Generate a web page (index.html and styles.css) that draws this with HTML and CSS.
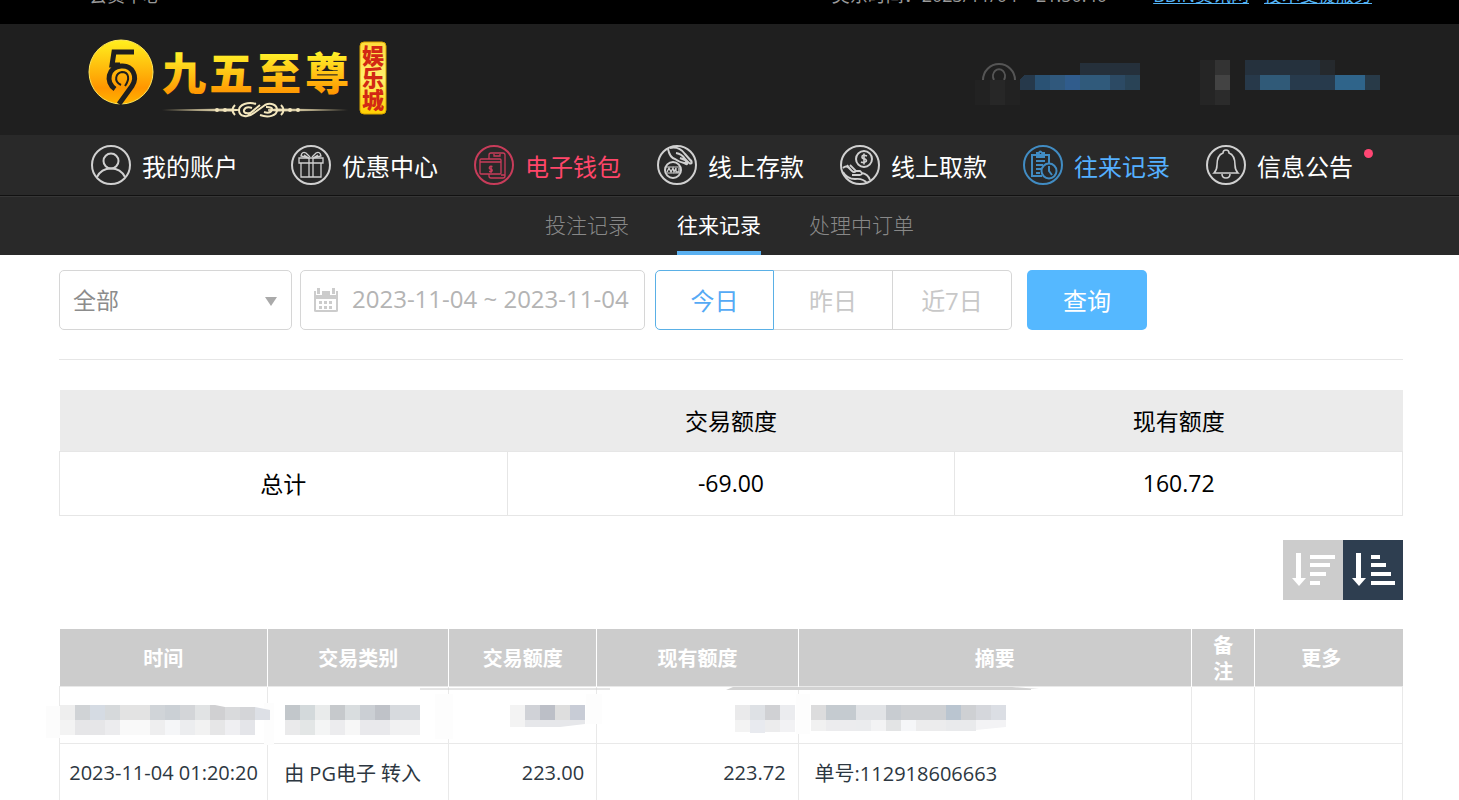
FILE: index.html
```html
<!DOCTYPE html>
<html lang="zh-CN">
<head>
    <meta charset="UTF-8">
    <meta name="viewport" content="width=device-width, initial-scale=1.0">
    <title>往来记录</title>
    <link rel="stylesheet" href="styles.css">
</head>
<body>

    <div class="topbar">
        <span>会员中心</span>
        <div class="topbar-right">
            <span class="topbar-time">美东时间：2023/11/04&nbsp;&nbsp;&nbsp; 21:50:40</span>
            <a href="#">BBIN资讯网</a>
            <a href="#">技术支援服务</a>
        </div>
    </div>

    <header class="header">
        <a href="#" class="logo">
            <svg width="300" height="82" viewBox="88 38 300 82">
                <defs>
                    <linearGradient id="gold" x1="0" y1="0" x2="0" y2="1">
                        <stop offset="0" stop-color="#fff01e"/>
                        <stop offset="0.75" stop-color="#ff9600"/>
                        <stop offset="1" stop-color="#ffb400"/>
                    </linearGradient>
                    <linearGradient id="goldText" gradientUnits="userSpaceOnUse" x1="0" y1="52" x2="0" y2="94">
                        <stop offset="0" stop-color="#fff32a"/>
                        <stop offset="1" stop-color="#ff9500"/>
                    </linearGradient>
                    <linearGradient id="badge" x1="0" y1="0" x2="0" y2="1">
                        <stop offset="0" stop-color="#ffdc3c"/>
                        <stop offset="0.5" stop-color="#fff06e"/>
                        <stop offset="1" stop-color="#ffcf00"/>
                    </linearGradient>
                    <linearGradient id="line" gradientUnits="userSpaceOnUse" x1="162" y1="0" x2="348" y2="0">
                        <stop offset="0" stop-color="#e6d5a0" stop-opacity="0"/>
                        <stop offset="0.35" stop-color="#f3e6bd"/>
                        <stop offset="0.65" stop-color="#f3e6bd"/>
                        <stop offset="1" stop-color="#e6d5a0" stop-opacity="0"/>
                    </linearGradient>
                </defs>
                <circle cx="121" cy="72" r="32" fill="url(#gold)" stroke="#ffe65a"/>
                <g fill="none" stroke="#1f1f1f">
                    <path d="M134 52H114L112 65H120" stroke-width="5"/>
                    <path d="M115 89C105 82 108 67 121 66C133 65 138 77 132 86L119 104" stroke-width="5"/>
                    <path d="M121 85C113 81 116 73 122 72C129 72 130 79 125 86" stroke-width="2"/>
                </g>
                <text class="logo-name" x="162 209 257 305" y="90" fill="url(#goldText)">九五至尊</text>
                <path d="M162 110L232 109L240 110L232 111ZM348 110L276 109L268 110L276 111Z" fill="url(#line)" stroke="url(#line)"/>
                <g fill="none" stroke="#f3e6bd" stroke-width="2">
                    <path d="M256 104C248 101 239 105 239 110C239 117 248 118 254 113L265 105C271 102 277 105 277 110C277 116 268 118 260 115"/>
                    <path d="M250 113Q243 114 244 110Q246 106 252 108M266 107Q273 107 272 110Q270 114 264 112M248 115L260 105"/>
                    <path d="M235 105Q230 110 235 115M281 105Q286 110 281 115"/>
                </g>
                <g fill="#f3e6bd">
                    <circle cx="217" cy="110" r="2"/><circle cx="225" cy="110" r="2"/>
                    <circle cx="290" cy="110" r="2"/><circle cx="298" cy="110" r="2"/>
                </g>
                <rect x="360" y="42" width="26" height="72" rx="4" fill="url(#badge)" stroke="#d9a400"/>
                <text class="logo-badge" x="373" y="45">娱乐城</text>
            </svg>
        </a>
        <svg class="account" width="405" height="46" viewBox="975 60 405 46" shape-rendering="crispEdges">
            <g fill="none" stroke="#555" stroke-width="2" shape-rendering="auto">
                <path d="M983 80A16 16 0 0 1 1015 80"/>
                <path d="M994 80A6 7 0 1 1 1004 80"/>
            </g>
            <path d="M975 80h45v25h-45z" fill="#222"/><path d="M990 80h15v25h-15z" fill="#272727"/>
            <path d="M1080 63h60v12h-60z" fill="#25303b"/>
            <path d="M1020 80l4-5h11v15h-15z" fill="#26394b"/>
            <path d="M1035 75h15v15h-15z" fill="#2a5274"/>
            <path d="M1050 75h15v15h-15z" fill="#30587c"/>
            <path d="M1065 75h15v15h-15z" fill="#305c8c"/>
            <path d="M1080 75h30v15h-30z" fill="#305a7b"/>
            <path d="M1110 75h15v15h-15z" fill="#2c4a64"/>
            <path d="M1125 75h15v15h-15z" fill="#294356"/>
            <path d="M1200 60h15v45h-15z" fill="#252525"/>
            <path d="M1215 60h15v15h-15z" fill="#333"/>
            <path d="M1215 75h15v15h-15z" fill="#434343"/>
            <path d="M1215 90h15v15h-15z" fill="#2b2b2b"/>
            <path d="M1245 60h75v15h-75z" fill="#25313d"/>
            <path d="M1320 60h15v15h-15z" fill="#25292d"/>
            <path d="M1245 75h15v15h-15z" fill="#27394a"/>
            <path d="M1260 75h30v15h-30z" fill="#305a78"/>
            <path d="M1290 75h45v15h-45z" fill="#273a4c"/>
            <path d="M1335 75h30v15h-30z" fill="#2f648a"/>
            <path d="M1365 75h15v15h-15z" fill="#283a48"/>
        </svg>
    </header>

    <nav class="nav">
        <a href="#" class="nav-item nav-account">
            <svg class="nav-icon" viewBox="0 0 40 40">
                <circle cx="20" cy="20" r="19"/>
                <circle cx="20" cy="16" r="7.500"/>
                <path d="M6 32C9 26 14 23.500 20 23.500S31 26 34 32"/>
            </svg>
            我的账户
        </a>
        <a href="#" class="nav-item">
            <svg class="nav-icon" viewBox="0 0 40 40">
                <circle cx="20" cy="20" r="19"/>
                <g stroke-width="1.300">
                    <path d="M8 13H32V18H8ZM10 18V32H30V18M18 13V32M22 13V32"/>
                    <path d="M18 13L10 11Q11 6 15 8L19 12M22 13L30 11Q29 6 25 8L21 12M13 10L18 13M27 10L22 13"/>
                </g>
            </svg>
            优惠中心
        </a>
        <a href="#" class="nav-item nav-wallet">
            <svg class="nav-icon" viewBox="0 0 40 40">
                <circle cx="20" cy="20" r="19"/>
                <g stroke-width="1.300">
                    <rect x="6" y="14" width="21" height="15" rx="1"/>
                    <path d="M6 17H27M15 14V10Q15 8 17 8H29Q31 8 31 10V31Q31 33 29 33H17Q15 33 15 31V29M20 9V11H26V9M27 30H31"/>
                    <path d="M18.500 21.500H16Q14.500 23 16 24H17.500Q19 25.500 17.500 26.500H15M17 20.500V28"/>
                </g>
            </svg>
            电子钱包
        </a>
        <a href="#" class="nav-item">
            <svg class="nav-icon" viewBox="0 0 40 40">
                <circle cx="20" cy="20" r="19"/>
                <circle cx="16" cy="25" r="8"/>
                <path d="M9 22H23M9 28H23" stroke-width="1"/>
                <path d="M10 27L12 23L14 27L16 23L17 27L19 23V27H22V23" stroke-width="1.300"/>
                <path d="M11 4Q13 13 18 14Q22 17 27 18Q31 17 28 15L23 13M13 3Q22 1 28 9L35 17M19 8Q25 9 28 14L32 18M27 18Q31 21 30 17M32 18Q36 20 34 15"/>
            </svg>
            线上存款
        </a>
        <a href="#" class="nav-item">
            <svg class="nav-icon" viewBox="0 0 40 40">
                <circle cx="20" cy="20" r="19"/>
                <circle cx="24" cy="14" r="8"/>
                <path d="M27 11Q22 9 22 12Q22 14 25 14Q28 16 25 17Q23 18 21 17M24 8.500V19.500" stroke-width="1.600"/>
                <path d="M3 23Q6 20 9 23L12 26Q14 28 16 26L10 20M3 27Q7 34 15 34Q23 33 27 38M12 30H20Q24 29 20 26H15M22 28Q28 29 30 35M7 20L12 26" stroke-width="1.800"/>
            </svg>
            线上取款
        </a>
        <a href="#" class="nav-item nav-current">
            <svg class="nav-icon" viewBox="0 0 40 40">
                <circle cx="20" cy="20" r="19"/>
                <g stroke-width="2">
                    <path d="M19 31H9V10H26V18M14 8H16Q17 5 19 8H21V12H14ZM13 16H22M13 20H20M13 24H18M13 28H17"/>
                    <circle cx="26" cy="26" r="7.500"/>
                    <path d="M26 21V26L29 30"/>
                </g>
            </svg>
            往来记录
        </a>
        <a href="#" class="nav-item">
            <svg class="nav-icon" viewBox="0 0 40 40">
                <circle cx="20" cy="20" r="19"/>
                <path d="M8 28Q11 25 11 20Q11 10 17 8Q17 5 20 5T23 8Q29 10 29 20Q29 25 32 28ZM16 29Q16 33 20 33T24 29" stroke-width="1.600"/>
            </svg>
            信息公告
            <span class="nav-dot"></span>
        </a>
    </nav>

    <nav class="subnav">
        <a href="#">投注记录</a>
        <a href="#" class="active">往来记录</a>
        <a href="#">处理中订单</a>
    </nav>

    <main class="content">
        <form class="filters">
            <div class="select-box">
                <select aria-label="交易类别">
                    <option>全部</option>
                </select>
            </div>
            <label class="date-box">
                <svg width="26" height="26" viewBox="0 0 26 26">
                    <path d="M1 4H25V24Q25 25 23 25H3Q1 25 1 24Z" fill="#ccc"/>
                    <path d="M3 12H23V23H3Z" fill="#fff"/>
                    <path d="M3 0H9V8H3ZM17 0H23V8H17Z" fill="#fff"/>
                    <path d="M4 1H7V7H4ZM19 1H22V7H19Z" fill="#ccc"/>
                    <path d="M6 14H9V17H6ZM11 14H14V17H11ZM16 14H19V17H16ZM6 19H9V22H6ZM11 19H14V22H11ZM16 19H19V22H16Z" fill="#ccc"/>
                </svg>
                <input type="text" value="2023-11-04 ~ 2023-11-04" aria-label="日期" readonly>
            </label>
            <div class="days">
                <button type="button" class="active">今日</button>
                <button type="button">昨日</button>
                <button type="button">近7日</button>
            </div>
            <button type="button" class="search-btn">查询</button>
        </form>

        <table class="summary">
            <thead>
                <tr>
                    <th></th>
                    <th>交易额度</th>
                    <th>现有额度</th>
                </tr>
            </thead>
            <tbody>
                <tr>
                    <td>总计</td>
                    <td>-69.00</td>
                    <td>160.72</td>
                </tr>
            </tbody>
        </table>

        <div class="sort">
            <button type="button" aria-label="降序">
                <svg width="60" height="60" viewBox="0 0 60 60">
                    <path d="M13 13H18V38H23L16 46L9 38H13Z"/>
                    <path d="M27 15H52V19H27ZM27 23H47V27H27ZM27 32H43V36H27ZM27 41H37V45H27Z"/>
                </svg>
            </button>
            <button type="button" class="active" aria-label="升序">
                <svg width="60" height="60" viewBox="0 0 60 60">
                    <path d="M13 13H18V38H23L16 46L9 38H13Z"/>
                    <path d="M28 15H37V19H28ZM28 23H43V27H28ZM28 32H48V36H28ZM28 41H52V45H28Z"/>
                </svg>
            </button>
        </div>

        <table class="records">
            <colgroup>
                <col class="col-time">
                <col class="col-type">
                <col class="col-amount">
                <col class="col-balance">
                <col class="col-summary">
                <col class="col-remark">
                <col class="col-more">
            </colgroup>
            <thead>
                <tr>
                    <th>时间</th>
                    <th>交易类别</th>
                    <th>交易额度</th>
                    <th>现有额度</th>
                    <th>摘要</th>
                    <th>备注</th>
                    <th class="more">更多</th>
                </tr>
            </thead>
            <tbody>
                <tr class="masked">
                    <td>
                        <svg width="208" height="56" viewBox="60 687 208 56">
                            <path d="M46 706h14v32h-14z" fill="#fcfcfc"/>
                            <path d="M264 703h10v42h-10z" fill="#fdfdfd"/>
                            <path d="M60 705h15v15h-15z" fill="#eee"/>
                            <path d="M75 705h15v15h-15z" fill="#d0d3d6"/>
                            <path d="M90 705h15v15h-15z" fill="#d5dbe3"/>
                            <path d="M105 705h15v15h-15z" fill="#d6d9db"/>
                            <path d="M120 705h30v15h-30z" fill="#e3e3e3"/>
                            <path d="M150 705h15v15h-15z" fill="#d0d4d8"/>
                            <path d="M165 705h15v15h-15z" fill="#cbd0d5"/>
                            <path d="M180 705h15v15h-15z" fill="#d3d5d8"/>
                            <path d="M195 705h15v15h-15z" fill="#e1e3e4"/>
                            <path d="M210 705h5l10 2v13h-15z" fill="#d0d0d2"/>
                            <path d="M225 707h15v13h-15z" fill="#d9dadc"/>
                            <path d="M240 707h15v13h-15z" fill="#d4d5d8"/>
                            <path d="M255 707l15 3v10h-15z" fill="#dde0e6"/>
                            <path d="M60 720h15v15h-15z" fill="#f3f3f3"/>
                            <path d="M75 720h30v15h-30z" fill="#e6e6e8"/>
                            <path d="M105 720h15v15h-15z" fill="#ececee"/>
                            <path d="M120 720h30v15h-30z" fill="#f9f9f9"/>
                            <path d="M150 720h15v15h-15z" fill="#eeeeef"/>
                            <path d="M165 720h15v15h-15z" fill="#f5f6f8"/>
                            <path d="M180 720h15v15h-15z" fill="#ecedef"/>
                            <path d="M195 720h15v15h-15z" fill="#f2f2f2"/>
                            <path d="M210 720h15v15h-15z" fill="#e6e6e7"/>
                            <path d="M225 720h15v15h-15z" fill="#efeff2"/>
                            <path d="M240 720h15v15h-15z" fill="#e4e5e9"/>
                        </svg>
                    </td>
                    <td>
                        <svg width="180" height="56" viewBox="268 687 180 56">
                            <path d="M420 689h190" stroke="#ccc"/>
                            <path d="M435 694h18v45h-18z" fill="#fdfdfd"/>
                            <path d="M285 705h15v15h-15z" fill="#c2c7cb"/>
                            <path d="M300 705h15v15h-15z" fill="#d3d9db"/>
                            <path d="M315 705h15v15h-15z" fill="#e9ebeb"/>
                            <path d="M330 705h15v15h-15z" fill="#c6c9cc"/>
                            <path d="M345 705h15v15h-15z" fill="#d9dddf"/>
                            <path d="M360 705h15v15h-15z" fill="#cbcfd4"/>
                            <path d="M375 705h15v15h-15z" fill="#bfc2c8"/>
                            <path d="M390 705h30v15h-30z" fill="#d7dade"/>
                            <path d="M285 720h15v15h-15z" fill="#eaeaeb"/>
                            <path d="M300 720h15v15h-15z" fill="#e3e6e6"/>
                            <path d="M315 720h15v15h-15z" fill="#f4f5f5"/>
                            <path d="M330 720h15v15h-15z" fill="#ececee"/>
                            <path d="M345 720h15v15h-15z" fill="#f7f7f7"/>
                            <path d="M360 720h30v15h-30z" fill="#e9e9ec"/>
                            <path d="M390 720h30v15h-30z" fill="#f1f1f2"/>
                        </svg>
                    </td>
                    <td>
                        <svg width="147" height="56" viewBox="449 687 147 56">
                            <path d="M586 694h16v30h-16z" fill="#fdfdfd"/>
                            <path d="M510 705h15v22h-15z" fill="#f3f3f3"/>
                            <path d="M525 705h15v15h-15z" fill="#d0d2d7"/>
                            <path d="M540 705h15v15h-15z" fill="#bcbfc7"/>
                            <path d="M555 705h15v15h-15z" fill="#dedede"/>
                            <path d="M570 705h15v15h-15z" fill="#c8ccd6"/>
                            <path d="M525 720h60v4l-25 3h-35z" fill="#e6e7ea"/>
                        </svg>
                    </td>
                    <td>
                        <svg width="200" height="56" viewBox="597 687 200 56">
                            <path d="M726 690l7-3h279l27 2h-8v1z" fill="#d2d2d2"/>
                            <path d="M796 694h14v40h-14z" fill="#fdfdfd"/>
                            <path d="M735 705h15v15h-15z" fill="#eaeaeb"/>
                            <path d="M750 705h15v15h-15z" fill="#dee1e5"/>
                            <path d="M765 705h15v15h-15z" fill="#d0d1d4"/>
                            <path d="M780 705h15v15h-15z" fill="#ebecef"/>
                            <path d="M735 720h15v12h-15z" fill="#f3f3f3"/>
                            <path d="M750 720h15v13h-15z" fill="#e8eaef"/>
                            <path d="M765 720h15v12h-15z" fill="#ececed"/>
                            <path d="M780 720h15v12h-15z" fill="#f2f2f4"/>
                        </svg>
                    </td>
                    <td>
                        <svg width="393" height="56" viewBox="798 687 393 56">
                            <path d="M810 705h15v15h-15z" fill="#dcdcdd"/>
                            <path d="M825 705h30v15h-30z" fill="#c5cbd0"/>
                            <path d="M855 705h30v15h-30z" fill="#e1e3e6"/>
                            <path d="M885 705h15v15h-15z" fill="#c8ccd1"/>
                            <path d="M900 705h45v15h-45z" fill="#ced0d3"/>
                            <path d="M945 705h15v15h-15z" fill="#bac5d0"/>
                            <path d="M960 705h15v15h-15z" fill="#ced0d3"/>
                            <path d="M975 705h15v15h-15z" fill="#d5d7dc"/>
                            <path d="M990 705h15v15h-15z" fill="#dbdee4"/>
                            <path d="M810 720h15v11h-15z" fill="#f1f1f1"/>
                            <path d="M825 720h30v11h-30z" fill="#ececee"/>
                            <path d="M855 720h15v11h-15z" fill="#ebecee"/>
                            <path d="M870 720h15v11h-15z" fill="#f3f3f4"/>
                            <path d="M885 720h15v11h-15z" fill="#e3e4e5"/>
                            <path d="M900 720h15v11h-15z" fill="#f5f6f8"/>
                            <path d="M915 720h30v11h-30z" fill="#ececed"/>
                            <path d="M945 720h30v11h-30z" fill="#e9eaec"/>
                            <path d="M975 720h30v7l-30 3z" fill="#f3f3f5"/>
                        </svg>
                    </td>
                    <td></td>
                    <td></td>
                </tr>
                <tr>
                    <td class="time">2023-11-04 01:20:20</td>
                    <td>由 PG电子 转入</td>
                    <td class="num">223.00</td>
                    <td class="num">223.72</td>
                    <td>单号:112918606663</td>
                    <td></td>
                    <td></td>
                </tr>
            </tbody>
        </table>
    </main>

</body>
</html>
```
FILE: styles.css
```css
* {
    box-sizing: border-box;
}
body {
    margin: 0;
    font-family: "Open Sans", "Noto Sans CJK SC", sans-serif;
    background-color: #fff;
    color: #000;
}
a {
    text-decoration: none;
}
button, select, input {
    font-family: inherit;
}

/* top */
.topbar {
    display: flex;
    justify-content: space-between;
    align-items: flex-end;
    height: 24px;
    padding: 0 87px 19px 89px;
    overflow: hidden;
    background-color: #000;
    color: #999;
    font-size: 18px;
    line-height: 20px;
}
.topbar-right {
    display: flex;
    gap: 15px;
}
.topbar-time {
    margin-right: 31px;
}
.topbar a {
    color: #55b4f5;
    text-decoration: underline;
}
.header {
    display: flex;
    justify-content: space-between;
    padding: 14px 79px 15px 88px;
    background-color: #1f1f1f;
}
.logo svg {
    display: block;
}
.logo-name {
    font-family: "Noto Sans CJK SC", sans-serif;
    font-size: 44px;
    font-weight: 900;
}
.logo-badge {
    font-family: "Noto Sans CJK SC", sans-serif;
    font-size: 22px;
    font-weight: 900;
    fill: #d22814;
    writing-mode: vertical-rl;
}
.account {
    margin-top: 22px;
}

/* menu */
.nav {
    display: flex;
    gap: 36px;
    height: 61px;
    padding: 0 88px 0 91px;
    background-color: #292929;
    border-bottom: 1px solid #111;
}
.nav-item {
    display: flex;
    align-items: center;
    gap: 11px;
    color: #fff;
    font-size: 24px;
    white-space: nowrap;
}
.nav-account {
    margin-right: 17px;
}
.nav-icon {
    width: 40px;
    height: 40px;
    fill: none;
    stroke: #d0d0d0;
    stroke-width: 2;
}
.nav-wallet {
    color: #ff4669;
}
.nav-wallet .nav-icon {
    stroke: #c83c5a;
}
.nav-current {
    color: #55b0ff;
}
.nav-current .nav-icon {
    stroke: #418cc3;
}
.nav-dot {
    width: 9px;
    height: 9px;
    margin-bottom: 24px;
    border-radius: 50%;
    background-color: #ff4673;
}
.subnav {
    display: flex;
    justify-content: center;
    gap: 48px;
    height: 59px;
    background-color: #292929;
    border-top: 1px solid #363636;
}
.subnav a {
    color: #888;
    font-size: 21px;
    font-weight: 300;
    line-height: 56px;
}
.subnav .active {
    color: #fff;
    font-weight: 400;
    border-bottom: 4px solid #5ab0f0;
}

/* filters */
.content {
    padding: 15px 56px 0 59px;
}
.filters {
    display: flex;
    height: 90px;
    padding-bottom: 29px;
    border-bottom: 1px solid #e6e6e6;
}
.select-box {
    position: relative;
    width: 233px;
    margin-right: 8px;
}
.select-box::after {
    content: "";
    position: absolute;
    top: 27px;
    right: 15px;
    border: 6px solid transparent;
    border-top: 9px solid #aaa;
    border-bottom: 0;
    pointer-events: none;
}
.select-box select {
    width: 100%;
    height: 60px;
    padding: 0 13px;
    appearance: none;
    border: 1px solid #d6d6d6;
    border-radius: 5px;
    background-color: #fff;
    color: #8c8c8c;
    font-size: 23px;
}
.date-box {
    display: flex;
    align-items: center;
    gap: 13px;
    width: 345px;
    height: 60px;
    margin-right: 10px;
    padding: 0 6px 0 12px;
    border: 1px solid #d6d6d6;
    border-radius: 5px;
}
.date-box svg {
    flex: none;
}
.date-box input {
    flex: 1;
    min-width: 0;
    padding: 0 0 4px;
    border: 0;
    outline: 0;
    color: #b4b4b4;
    font-size: 24px;
}
.days {
    display: flex;
    margin-right: 15px;
}
.days button {
    width: 119px;
    height: 60px;
    padding: 0 0 2px;
    border: 1px solid #d6d6d6;
    border-left: 0;
    background-color: #fff;
    color: #c8c8c8;
    font-size: 24px;
}
.days .active {
    border: 1px solid #5ab0e6;
    border-radius: 5px 0 0 5px;
    color: #55aaf5;
}
.days button:last-child {
    border-radius: 0 5px 5px 0;
}
.search-btn {
    width: 120px;
    height: 60px;
    padding: 0 0 2px;
    border: 0;
    border-radius: 5px;
    background-color: #55b8ff;
    color: #fff;
    font-size: 24px;
}

/* tables */
table {
    width: 100%;
    border-collapse: collapse;
    table-layout: fixed;
}
.summary {
    margin-top: 30px;
    font-size: 23px;
    text-align: center;
}
.summary th {
    height: 61px;
    padding: 0;
    background-color: #ebebeb;
    font-weight: 400;
}
.summary td {
    height: 64px;
    padding: 0;
    border: 1px solid #e6e6e6;
}
.sort {
    display: flex;
    justify-content: flex-end;
    margin: 24px 0 29px;
}
.sort button {
    width: 60px;
    height: 60px;
    padding: 0;
    border: 0;
    background-color: #ccc;
}
.sort .active {
    background-color: #2e3e50;
}
.sort svg {
    display: block;
    fill: #fff;
}
.records {
    font-size: 20px;
    color: #2d3741;
}
.records th {
    height: 58px;
    padding: 4px 20px 0;
    background-color: #ccc;
    border-left: 1px solid #fff;
    color: #fff;
    line-height: 26px;
}
.records th:first-child {
    border-left: 0;
}
.records .more {
    padding-right: 35px;
}
.records td {
    height: 57px;
    padding: 0 12px 0 16px;
    border: 1px solid #e9e9e9;
}
.records .time {
    padding: 0;
    text-align: center;
    white-space: nowrap;
}
.records .num {
    text-align: right;
}
.records .masked td {
    padding: 0;
}
.masked svg {
    display: block;
    overflow: visible;
}
.col-time {
    width: 15.5%;
}
.col-type {
    width: 13.5%;
}
.col-amount {
    width: 11%;
}
.col-balance {
    width: 15%;
}
.col-summary {
    width: 29.3%;
}
.col-remark {
    width: 4.7%;
}
.col-more {
    width: 11%;
}
```
